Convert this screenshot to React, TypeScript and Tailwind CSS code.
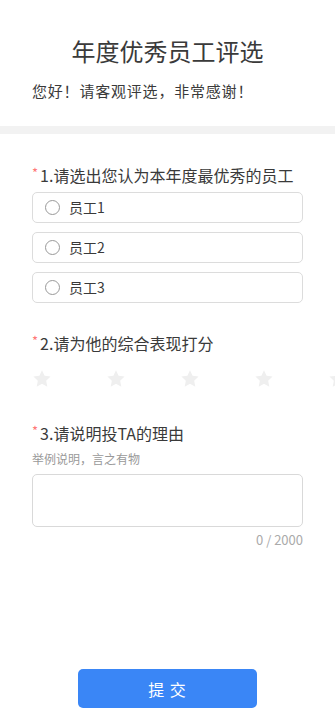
import React from "react";

const options = ["员工1", "员工2", "员工3"];

function Star() {
    return (
        <svg viewBox="0 0 24 24" className="w-[20px] h-[20px] shrink-0">
            <path
                d="M12 1.6l3.1 6.6 7.2.9-5.3 5 1.4 7.1L12 17.7l-6.4 3.5 1.4-7.1-5.3-5 7.2-.9z"
                fill="#efefef"
            />
        </svg>
    );
}

function Question({ no, text }: { no: number; text: string }) {
    return (
        <div className="flex items-center px-[32px] text-[16px] leading-[24px] text-[#3a3a3a]">
            <span className="text-[#f77] text-[13px] mr-[2px] -mt-[4px]">*</span>
            <span>
                {no}.{text}
            </span>
        </div>
    );
}

export default function App() {
    return (
        <div
            className="w-full min-h-screen bg-white flex flex-col overflow-x-hidden"
            style={{ fontFamily: '"Noto Sans CJK SC", "Noto Sans", sans-serif' }}
        >
            {/* Header */}
            <div className="pt-[35px] pb-[24px]">
                <h1 className="text-center text-[24px] leading-[32px] text-[#3a3a3a]">年度优秀员工评选</h1>
                <p className="mt-[13px] px-[32px] text-[15px] leading-[22px] tracking-[0.8px] text-[#3a3a3a]">
                    您好！请客观评选，非常感谢！
                </p>
            </div>
            <div className="h-[8px] bg-[#f2f2f2]" />

            {/* Q1 */}
            <div className="pt-[29px]">
                <Question no={1} text="请选出您认为本年度最优秀的员工" />
                <div className="mt-[5px] px-[32px] flex flex-col gap-[9px]">
                    {options.map((o) => (
                        <div
                            key={o}
                            className="h-[31px] border border-[#dcdcdc] rounded-[5px] flex items-center pl-[12px] gap-[9px]"
                        >
                            <span className="w-[15px] h-[15px] rounded-full border border-[#999]" />
                            <span className="text-[14px] text-[#3a3a3a]">{o}</span>
                        </div>
                    ))}
                </div>
            </div>

            {/* Q2 */}
            <div className="pt-[28px]">
                <Question no={2} text="请为他的综合表现打分" />
                <div className="mt-[14px] pl-[32px] flex gap-[54px]">
                    {[0, 1, 2, 3, 4].map((i) => (
                        <Star key={i} />
                    ))}
                </div>
            </div>

            {/* Q3 */}
            <div className="pt-[32px]">
                <Question no={3} text="请说明投TA的理由" />
                <p className="mt-[5px] px-[32px] text-[12px] leading-[18px] text-[#999]">举例说明，言之有物</p>
                <div className="mt-[6px] mx-[32px] h-[53px] border border-[#d9d9d9] rounded-[5px]" />
                <div className="mt-[4px] px-[32px] text-right text-[13px] leading-[18px] text-[#aaa]">0 / 2000</div>
            </div>

            {/* Submit */}
            <div className="mt-auto pb-[17px] flex justify-center">
                <button className="w-[179px] h-[39px] rounded-[5px] bg-[#3a86f6] text-white text-[16px] tracking-[1px]">
                    提 交
                </button>
            </div>
        </div>
    );
}
